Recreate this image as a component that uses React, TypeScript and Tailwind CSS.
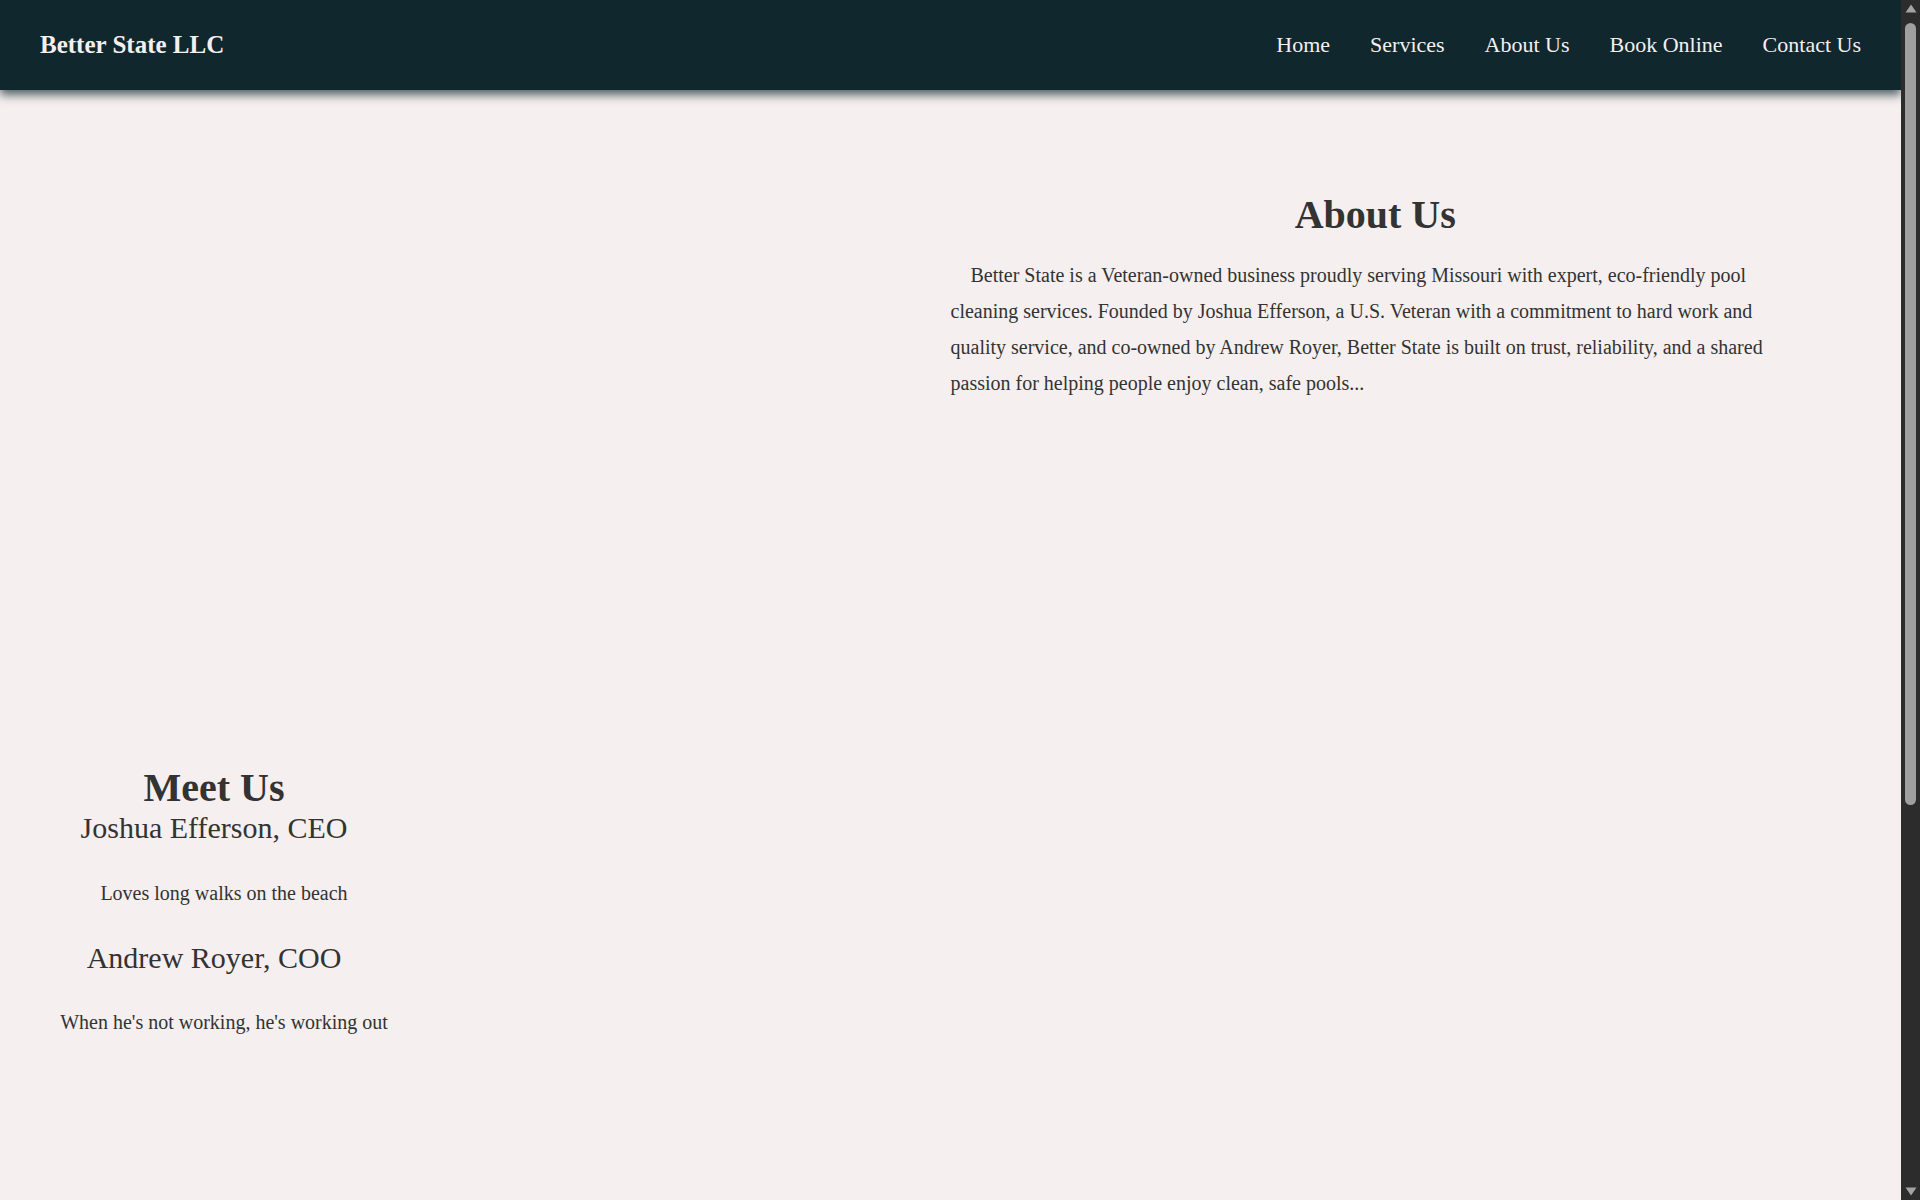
import React from "react";

const serif = { fontFamily: '"Liberation Serif", "Times New Roman", serif' };

function FakeScrollbar() {
  return (
    <div className="flex h-full w-[19px] shrink-0 flex-col items-center bg-[#2c2c2c]">
      <div className="flex h-[17px] w-full items-center justify-center">
        <svg width="12" height="9" viewBox="0 0 12 9">
          <path d="M6 0.5 L11.5 8.5 L0.5 8.5 Z" fill="#a3a3a3" />
        </svg>
      </div>
      <div className="mt-[6px] h-[782px] w-[11px] rounded-full bg-[#9f9f9f]" />
      <div className="flex-1" />
      <div className="flex h-[17px] w-full items-center justify-center">
        <svg width="12" height="9" viewBox="0 0 12 9">
          <path d="M0.5 0.5 L11.5 0.5 L6 8.5 Z" fill="#a3a3a3" />
        </svg>
      </div>
    </div>
  );
}

export default function App() {
  const links = ["Home", "Services", "About Us", "Book Online", "Contact Us"];
  return (
    <div className="flex h-screen w-full overflow-hidden bg-[#f5efef] text-[#333333]" style={serif}>
      <main className="min-w-0 flex-1 overflow-hidden">
        <header className="relative z-10 flex h-[90px] items-center justify-between bg-[#10272e] px-[40px] shadow-[0_5px_9px_rgba(16,39,46,0.7)]">
          <div className="text-[25px] font-bold text-[#f5efef]">Better State LLC</div>
          <nav className="flex items-center gap-[40px]">
            {links.map((l) => (
              <a key={l} className="text-[22px] leading-[26px] text-[#f5efef]">
                {l}
              </a>
            ))}
          </nav>
        </header>

        <section className="grid h-[675px] grid-cols-2">
          <div />
          <div className="pr-[101px] pt-[102px]">
            <h2 className="text-center text-[40px] font-bold leading-[46px]">About Us</h2>
            <p className="mt-[19px] indent-[20px] text-[20px] leading-[36px]">
              Better State is a Veteran-owned business proudly serving Missouri with expert, eco-friendly pool
              cleaning services. Founded by Joshua Efferson, a U.S. Veteran with a commitment to hard work and
              quality service, and co-owned by Andrew Royer, Better State is built on trust, reliability, and a
              shared passion for helping people enjoy clean, safe pools...
            </p>
          </div>
        </section>

        <section className="pb-[750px]">
          <div className="flex w-[428px] flex-col text-center">
            <h2 className="text-[40px] font-bold leading-[46px]">Meet Us</h2>
            <h3 className="text-[30px] leading-[34.5px]">Joshua Efferson, CEO</h3>
            <p className="mt-[29px] indent-[20px] text-[20px] leading-[36px]">Loves long walks on the beach</p>
            <h3 className="mt-[30px] text-[30px] leading-[34.5px]">Andrew Royer, COO</h3>
            <p className="mt-[29px] indent-[20px] text-[20px] leading-[36px]">
              When he's not working, he's working out
            </p>
          </div>
        </section>
      </main>
      <FakeScrollbar />
    </div>
  );
}
